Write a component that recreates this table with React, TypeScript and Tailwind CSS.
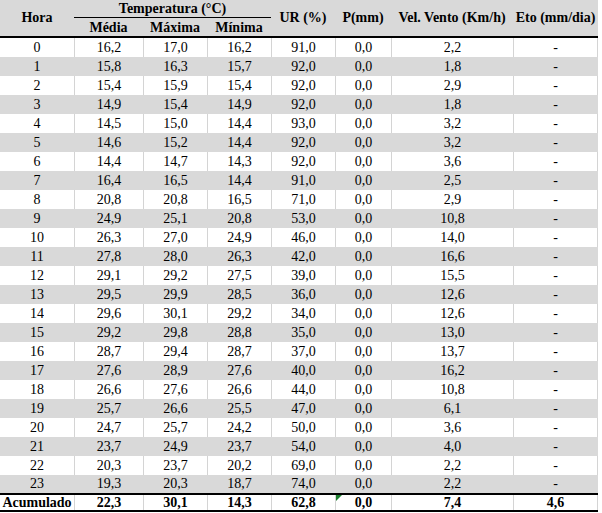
import React from "react";

const rows: string[][] = [
  ["0", "16,2", "17,0", "16,2", "91,0", "0,0", "2,2", "-"],
  ["1", "15,8", "16,3", "15,7", "92,0", "0,0", "1,8", "-"],
  ["2", "15,4", "15,9", "15,4", "92,0", "0,0", "2,9", "-"],
  ["3", "14,9", "15,4", "14,9", "92,0", "0,0", "1,8", "-"],
  ["4", "14,5", "15,0", "14,4", "93,0", "0,0", "3,2", "-"],
  ["5", "14,6", "15,2", "14,4", "92,0", "0,0", "3,2", "-"],
  ["6", "14,4", "14,7", "14,3", "92,0", "0,0", "3,6", "-"],
  ["7", "16,4", "16,5", "14,4", "91,0", "0,0", "2,5", "-"],
  ["8", "20,8", "20,8", "16,5", "71,0", "0,0", "2,9", "-"],
  ["9", "24,9", "25,1", "20,8", "53,0", "0,0", "10,8", "-"],
  ["10", "26,3", "27,0", "24,9", "46,0", "0,0", "14,0", "-"],
  ["11", "27,8", "28,0", "26,3", "42,0", "0,0", "16,6", "-"],
  ["12", "29,1", "29,2", "27,5", "39,0", "0,0", "15,5", "-"],
  ["13", "29,5", "29,9", "28,5", "36,0", "0,0", "12,6", "-"],
  ["14", "29,6", "30,1", "29,2", "34,0", "0,0", "12,6", "-"],
  ["15", "29,2", "29,8", "28,8", "35,0", "0,0", "13,0", "-"],
  ["16", "28,7", "29,4", "28,7", "37,0", "0,0", "13,7", "-"],
  ["17", "27,6", "28,9", "27,6", "40,0", "0,0", "16,2", "-"],
  ["18", "26,6", "27,6", "26,6", "44,0", "0,0", "10,8", "-"],
  ["19", "25,7", "26,6", "25,5", "47,0", "0,0", "6,1", "-"],
  ["20", "24,7", "25,7", "24,2", "50,0", "0,0", "3,6", "-"],
  ["21", "23,7", "24,9", "23,7", "54,0", "0,0", "4,0", "-"],
  ["22", "20,3", "23,7", "20,2", "69,0", "0,0", "2,2", "-"],
  ["23", "19,3", "20,3", "18,7", "74,0", "0,0", "2,2", "-"],
];

const total = ["Acumulado", "22,3", "30,1", "14,3", "62,8", "0,0", "7,4", "4,6"];

const cols = "grid grid-cols-[74px_69px_64px_64px_64px_56px_122px_85px]";

function T({ children }: { children: React.ReactNode }) {
  return <span className="inline-block scale-y-110">{children}</span>;
}

export default function App() {
  return (
    <div
      className="w-[602px] h-[513px] bg-white text-black text-[14px] leading-none"
      style={{ fontFamily: '"Liberation Serif", "Times New Roman", serif' }}
    >
      <div className="w-[598px]">
        {/* Header */}
        <div className={`${cols} grid-rows-[18px_18px] bg-[#d9d9d9] font-bold border-b-2 border-black`}>
          <div className="row-span-2 flex items-center justify-center"><T>Hora</T></div>
          <div className="col-span-3 flex items-center justify-center border-b border-black pt-[1px]">
            <T>Temperatura (°C)</T>
          </div>
          <div className="row-span-2 flex items-center justify-center"><T>UR (%)</T></div>
          <div className="row-span-2 flex items-center justify-center"><T>P(mm)</T></div>
          <div className="row-span-2 flex items-center justify-center"><T>Vel. Vento (Km/h)</T></div>
          <div className="row-span-2 flex items-center justify-center"><T>Eto (mm/dia)</T></div>
          <div className="flex items-center justify-center pt-[1px]"><T>Média</T></div>
          <div className="flex items-center justify-center pt-[1px]"><T>Máxima</T></div>
          <div className="flex items-center justify-center pt-[1px]"><T>Mínima</T></div>
        </div>

        {/* Body */}
        {rows.map((r, i) => {
          const gray = i % 2 === 1;
          return (
            <div
              key={i}
              className={`${cols} ${i === rows.length - 1 ? "h-[18px]" : "h-[19px]"} ${
                gray ? "bg-[#d9d9d9]" : "bg-white"
              }`}
            >
              {r.map((c, j) => (
                <div
                  key={j}
                  className={`flex items-center justify-center ${
                    j > 0 ? "border-l" : ""
                  } ${j === 7 ? "border-r" : ""} ${gray ? "border-[#d9d9d9]" : "border-[#d4d4d4]"}`}
                >
                  <T>{c}</T>
                </div>
              ))}
            </div>
          );
        })}

        {/* Total */}
        <div className={`${cols} h-[19px] border-t-2 border-b-2 border-black font-bold bg-white`}>
          {total.map((c, j) => (
            <div
              key={j}
              className={`relative flex items-center justify-center border-[#d4d4d4] ${
                j > 0 ? "border-l" : ""
              } ${j === 7 ? "border-r" : ""}`}
            >
              {j === 5 && (
                <svg className="absolute left-0 top-0" width="6" height="6" viewBox="0 0 6 6">
                  <polygon points="0,0 6,0 0,6" fill="#1b7f2e" />
                </svg>
              )}
              <T>{c}</T>
            </div>
          ))}
        </div>
      </div>
    </div>
  );
}
